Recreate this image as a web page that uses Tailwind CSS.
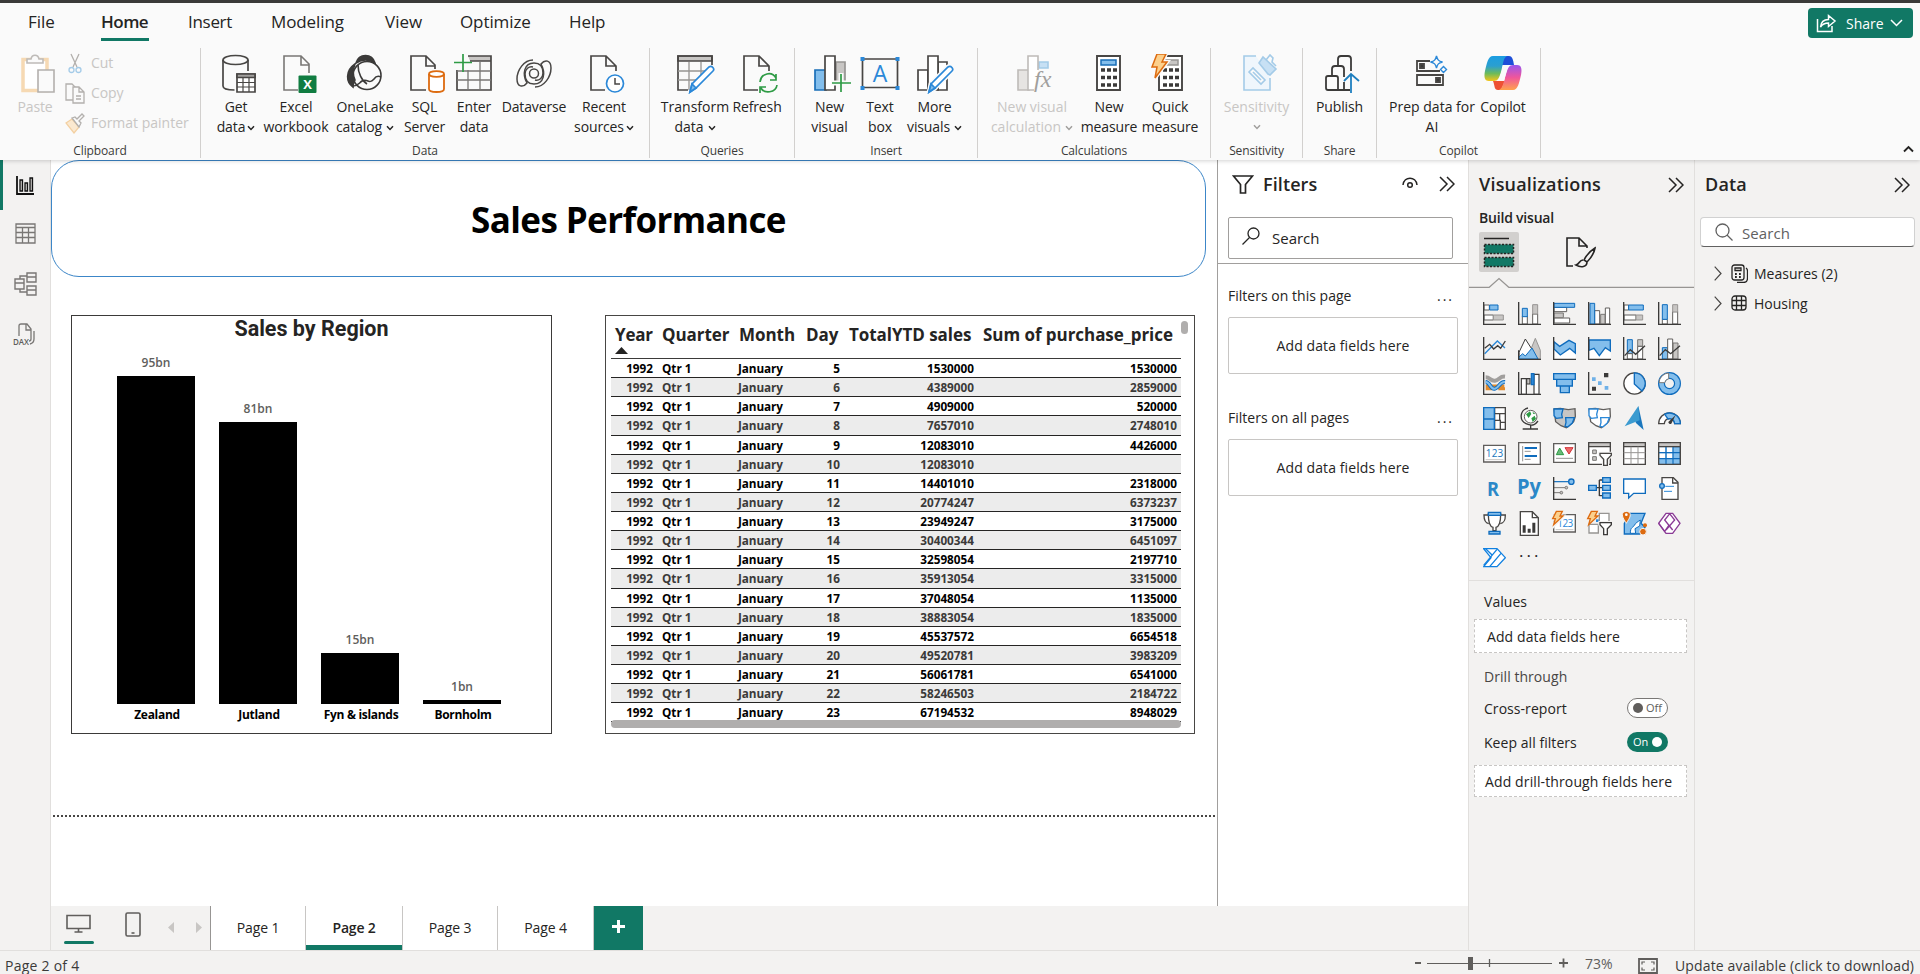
<!DOCTYPE html>
<html lang="en">
<head>
<meta charset="utf-8">
<title>Sales Performance</title>
<script src="https://cdn.jsdelivr.net/npm/@tailwindcss/browser@4"></script>
</head>
<body class="font-['Open_Sans','Noto_Sans',sans-serif] text-[14px] text-[#252423] bg-[#f3f2f1] overflow-hidden">
<svg class="hidden">
  <symbol id="chev" viewBox="0 0 8 6"><path d="M1 1.2 4 4.4 7 1.2" fill="none" stroke="currentColor" stroke-width="1.5"/></symbol>
  <symbol id="dbl" viewBox="0 0 16 16"><path d="M1 1l7 7-7 7M8 1l7 7-7 7" fill="none" stroke="#252423" stroke-width="1.5"/></symbol>
  <symbol id="axes" viewBox="0 0 69 69"><path d="M2 0V67H69" fill="none" stroke="#3b3a39" stroke-width="4"/></symbol>
</svg>
<div class="w-[1920px] h-[974px] flex flex-col overflow-hidden">

<!-- Ribbon -->
<header class="relative z-10 h-[160px] shrink-0 bg-[#fafafa] border-t-[3px] border-[#3b3a39] shadow-[0_1px_4px_rgba(0,0,0,0.18)] flex flex-col">
  <div class="h-[45px] flex justify-between shrink-0">
    <nav class="flex pl-[28px] pt-[6px] text-[17px] leading-[26px] whitespace-nowrap">
      <span class="w-[73px]">File</span>
      <span class="w-[87px]"><span class="inline-block h-[32px] w-[48px] font-semibold tracking-[-0.5px] border-b-[3px] border-[#117865]">Home</span></span>
      <span class="w-[83px] tracking-[-0.3px]">Insert</span>
      <span class="w-[114px] tracking-[-0.1px]">Modeling</span>
      <span class="w-[75px]">View</span>
      <span class="w-[109px] tracking-[-0.1px]">Optimize</span>
      <span class="tracking-[-0.1px]">Help</span>
    </nav>
    <div class="mt-[5px] mr-[7px] w-[105px] h-[30px] rounded-[4px] bg-[#117865] text-white flex items-center pl-[8px]">
      <svg class="w-[21px] h-[20px]" viewBox="0 0 21 20" fill="none" stroke="#fff" stroke-width="1.5"><path d="M1.5 6v12.5H16V13"/><path d="M4.500 14c.5-5 3-7.500 8-7.500V2.500L19 8l-6.500 5.500v-3.500c-3.500 0-6 1-8 4z"/></svg>
      <span class="ml-[9px] text-[14px]">Share</span>
      <svg class="ml-[6px] w-[13px] h-[8px]" viewBox="0 0 13 8"><path d="M1 1l5.500 5.500L12 1" fill="none" stroke="#fff" stroke-width="1.5"/></svg>
    </div>
  </div>
  <div class="flex h-[110px] text-center leading-[20px] tracking-[-0.12px] whitespace-nowrap relative">
    <section class="w-[201px] border-r border-[#d2d0ce] flex flex-col justify-between text-[#c8c6c4]">
      <div class="flex">
        <div class="w-[64px] pl-[6px] pt-[6px] flex flex-col items-center">
          <svg class="w-[36px] h-[40px] ml-[6px]" viewBox="0 0 36 40" fill="none" stroke-width="1.600"><path d="M3 5.500h24v31H3z" stroke="#f6d9b3" stroke-width="3.500" fill="#fff"/><path d="M7 9V5h4c1-5 7-5 8 0h4v4z" fill="#fafafa" stroke="#bebbb8"/><path d="M18 16h16v22H18z" fill="#fafafa" stroke="#b3b0ad"/></svg>
          <span class="mt-[3px] self-center">Paste</span>
        </div>
        <div class="flex flex-col text-left pl-px">
          <div class="h-[30px] flex items-center gap-[6px]"><svg class="w-[20px] h-[21px]" viewBox="0 0 20 21" fill="none" stroke="#b3b0ad" stroke-width="1.300"><path d="M6 1l6 13M14 1L8 14"/><circle cx="6.500" cy="17" r="2.500" stroke="#a4cbe8"/><circle cx="13.500" cy="17" r="2.500" stroke="#a4cbe8"/></svg>Cut</div>
          <div class="h-[30px] flex items-center gap-[6px]"><svg class="w-[20px] h-[21px]" viewBox="0 0 20 21" fill="#fafafa" stroke="#b3b0ad" stroke-width="1.300"><path d="M1 1h6l4 4v12H1z"/><path d="M8 4h6l5 5v11H8zM14 4v5h5M11 13h5M11 16h5"/></svg>Copy</div>
          <div class="h-[30px] flex items-center gap-[6px]"><svg class="w-[20px] h-[21px]" viewBox="0 0 20 21" fill="none" stroke-width="1.300"><path d="M1 10l6-4 7 8-5 6z" fill="#fbe9d0" stroke="#f3d0a2"/><path d="M7 5l3-1 2 2 5-5 2 2-5 5 2 2-2 4z" fill="#fafafa" stroke="#b3b0ad"/></svg><span class="tracking-[0px]">Format painter</span></div>
        </div>
      </div>
      <div class="text-[12px] leading-[13px] text-[#3b3a39] mb-px">Clipboard</div>
    </section>
    <section class="w-[449px] border-r border-[#d2d0ce] flex flex-col justify-between">
      <div class="flex pl-[10px] pt-[6px]">
        <div class="w-[50px] flex flex-col items-center"><svg class="w-[36px] h-[40px] ml-[6px]" viewBox="0 0 36 40" fill="none" stroke="#484644" stroke-width="1.700"><ellipse cx="14.500" cy="6" rx="12.500" ry="4.500"/><path d="M2 6v26c0 3 6 4 11.500 4M27 6V17"/><path d="M16 20h18v18H16z" fill="#fff"/><path d="M16 20h18v3.500H16z" fill="#a19f9d"/><path d="M16 28.500h18M16 33h18M22 24v14M28 24v14" stroke-width="1.200"/></svg><span class="mt-[3px]">Get<br>data<svg class="inline w-[8px] h-[6px] ml-[2px]"><use href="#chev"/></svg></span></div>
        <div class="w-[70px] flex flex-col items-center"><svg class="w-[36px] h-[40px] ml-[6px]" viewBox="0 0 36 40" fill="none"><path d="M17 36H3V2h17l8 8v9M20 2v9h8" stroke="#797775" stroke-width="1.600"/><rect x="17.500" y="21.500" width="18" height="17.500" rx="1" fill="#107c41"/><text x="26.500" y="35" font-size="13" font-weight="700" fill="#fff" text-anchor="middle">X</text></svg><span class="mt-[3px] tracking-[0px]">Excel<br>workbook</span></div>
        <div class="w-[68px] flex flex-col items-center"><svg class="w-[38px] h-[40px]" viewBox="0 0 38 40" fill="none" stroke="#3b3a39" stroke-width="1.600"><path d="M10 9C13-1 26-1 29 9c-6-4-13-4-19 0zM9 10C-1 17 0 28 7 33c0-3 1-5 2-7-3-6-2-11 0-16z" fill="#3b3a39"/><circle cx="21" cy="21.500" r="14"/><path d="M12 11c0 8 4 16 9 19M7 32c5 0 6-3 9-5 6-3 7 4 12-2 2-3 5-3 7-2"/></svg><span class="mt-[3px]">OneLake<br>catalog<svg class="inline w-[8px] h-[6px] ml-[4px]"><use href="#chev"/></svg></span></div>
        <div class="w-[52px] flex flex-col items-center"><svg class="w-[36px] h-[40px] ml-[6px]" viewBox="0 0 36 40" fill="none"><path d="M16 36H1V2h15l9 9v4M16 2v10h9" stroke="#484644" stroke-width="1.700"/><g stroke="#dd6b10" stroke-width="1.800" fill="#fff"><path d="M19 20v15c0 4 15 4 15 0V20"/><ellipse cx="26.500" cy="20" rx="7.500" ry="2.800"/></g></svg><span class="mt-[3px] -ml-px">SQL<br>Server</span></div>
        <div class="w-[46px] flex flex-col items-center"><svg class="w-[40px] h-[40px]" viewBox="0 0 40 40" fill="none" stroke="#484644" stroke-width="1.700"><path d="M14 2h23v5H16z" fill="#c8c6c4" stroke="none"/><path d="M14 2h23v34H3V16M16 7h21"/><path d="M3 17h34M3 26h34M14 16v20M26 8v28" stroke="#797775" stroke-width="1.300"/><path d="M9 0v18M0 8.500h18" stroke="#2e9b45" stroke-width="1.700"/></svg><span class="mt-[3px]">Enter<br>data</span></div>
        <div class="w-[74px] flex flex-col items-center"><svg class="w-[38px] h-[40px]" viewBox="0 0 38 40" fill="none" stroke="#484644" stroke-width="1.500"><g id="swirl"><path d="M18 6C9 6 2 16 2 25c0 8 6 9 10 4-5-9-3-20 7-20 6 0 9 4 9 10 0 5-4 8-8 7"/></g><use href="#swirl" transform="rotate(180 19 19.500)"/><circle cx="19" cy="19.500" r="4.500"/></svg><span class="mt-[3px]">Dataverse</span></div>
        <div class="w-[66px] flex flex-col items-center"><svg class="w-[36px] h-[40px] ml-[6px]" viewBox="0 0 36 40" fill="none"><path d="M16 36H2V2h15l10 10v5M17 2v10h10" stroke="#484644" stroke-width="1.700"/><circle cx="26" cy="29.500" r="8.500" fill="#fff" stroke="#2b88d8" stroke-width="1.700"/><path d="M26 24v6h5" stroke="#484644" stroke-width="1.500"/></svg><span class="mt-[3px]">Recent<br>sources<svg class="inline w-[8px] h-[6px] ml-[2px]"><use href="#chev"/></svg></span></div>
      </div>
      <div class="text-[12px] leading-[13px] text-[#3b3a39] mb-px">Data</div>
    </section>
    <section class="w-[145px] border-r border-[#d2d0ce] flex flex-col justify-between">
      <div class="flex pl-[10px] pt-[6px]">
        <div class="w-[70px] flex flex-col items-center"><svg class="w-[40px] h-[40px]" viewBox="0 0 40 40" fill="none" stroke="#484644" stroke-width="1.700"><path d="M3 2h34v5H3z" fill="#c8c6c4"/><path d="M13 36H3V2h34v9"/><path d="M3 17h29M3 26h19M14 8v28M26 8v14" stroke="#979593" stroke-width="1.300"/><path d="M15 38l2-8 17-17c3-2 6 2 4 4L21 34z" fill="#fff" stroke="#2b88d8"/><path d="M15 38l2-8 4 4z" fill="#83beec" stroke="#2b88d8"/></svg><span class="mt-[3px] tracking-[0px]">Transform<br>data<svg class="inline w-[8px] h-[6px] ml-[4px]"><use href="#chev"/></svg></span></div>
        <div class="w-[54px] flex flex-col items-center"><svg class="w-[36px] h-[40px] ml-[6px]" viewBox="0 0 36 40" fill="none"><path d="M16 36H2V2h15l10 10v5M17 2v10h10" stroke="#484644" stroke-width="1.700"/><path d="M18 28c1-9 12-11 16-4M34 20v6h-6M35 31c-1 8-13 9-16 3M18 39v-6h6" stroke="#2e9b45" stroke-width="1.700"/></svg><span class="mt-[3px]">Refresh</span></div>
      </div>
      <div class="text-[12px] leading-[13px] text-[#3b3a39] mb-px">Queries</div>
    </section>
    <section class="w-[183px] border-r border-[#d2d0ce] flex flex-col justify-between">
      <div class="flex pl-[10px] pt-[6px]">
        <div class="w-[49px] flex flex-col items-center"><svg class="w-[38px] h-[40px] ml-[4px]" viewBox="0 0 38 40" fill="none" stroke-width="1.700"><path d="M2 16h11v20H2z" fill="#83beec" stroke="#1a6fb8"/><path d="M23 8h9v20h-9z" fill="#c8c6c4" stroke="#979593"/><path d="M12 2h10v34H12z" fill="#fff" stroke="#484644"/><path d="M28 19v19M18 29h20" stroke="#fafafa" stroke-width="5"/><path d="M28 20v18M19 29h19" stroke="#2e9b45"/></svg><span class="mt-[3px]">New<br>visual</span></div>
        <div class="w-[52px] flex flex-col items-center"><svg class="w-[40px] h-[40px]" viewBox="0 0 40 40" fill="none"><path d="M2.500 5h35v28.500h-35z" stroke="#484644" stroke-width="1.700"/><path d="M.5 3h4v4h-4zM35.500 3h4v4h-4zM.5 32h4v4h-4zM35.500 32h4v4h-4z" fill="#2b88d8"/><text x="20" y="27.500" font-size="23" fill="#2b88d8" text-anchor="middle" textLength="14">A</text></svg><span class="mt-[3px]">Text<br>box</span></div>
        <div class="w-[57px] flex flex-col items-center"><svg class="w-[38px] h-[40px]" viewBox="0 0 38 40" fill="none" stroke="#484644" stroke-width="1.700"><path d="M22 8h9v28h-9z" fill="#fff"/><path d="M2 16h10v20H2z" fill="#fff"/><path d="M12 2h10v34H12z" fill="#fff"/><path d="M13 39l2-9 17-17c3-2 6 2 4 4L19 34z" fill="#fff" stroke="#fafafa" stroke-width="5"/><path d="M13 38l2-8 17-17c3-2 6 2 4 4L19 34z" fill="#fff" stroke="#2b88d8"/><path d="M13 38l2-8 4 4z" fill="#83beec" stroke="#2b88d8"/></svg><span class="mt-[3px]">More<br>visuals<svg class="inline w-[8px] h-[6px] ml-[4px]"><use href="#chev"/></svg></span></div>
      </div>
      <div class="text-[12px] leading-[13px] text-[#3b3a39] mb-px">Insert</div>
    </section>
    <section class="w-[233px] border-r border-[#d2d0ce] flex flex-col justify-between">
      <div class="flex pl-[9px] pt-[6px]">
        <div class="w-[90px] flex flex-col items-center text-[#c8c6c4] tracking-[0px]"><svg class="w-[38px] h-[40px] ml-[6px]" viewBox="0 0 38 40" fill="none" stroke-width="1.600"><path d="M2 16h11v20H2z" fill="#e6e4e2" stroke="#bebbb8"/><path d="M23 8h9v6h-9z" fill="#c7e0f4" stroke="#a4cbe8"/><path d="M22 16V2H12v34h6" fill="#fff" stroke="#bebbb8"/><text x="18" y="33" font-size="24" font-style="italic" font-family="Liberation Serif, serif" fill="#a19f9d">fx</text></svg><span class="mt-[3px]">New visual<br>calculation<svg class="inline w-[8px] h-[6px] ml-[4px] text-[#a19f9d]"><use href="#chev"/></svg></span></div>
        <div class="w-[64px] flex flex-col items-center"><svg class="w-[38px] h-[40px]" viewBox="0 0 38 40" fill="none"><path d="M7 2h23v34H7z" stroke="#484644" stroke-width="1.900" fill="#fff"/><path d="M11 6h15v5H11z" fill="#83beec" stroke="#1a6fb8" stroke-width="1.500"/><path d="M11 16h16M11 23.500h16M11 31h16" stroke="#3b3a39" stroke-width="3.500" stroke-dasharray="4 2"/></svg><span class="mt-[3px] tracking-[-0.1px]">New<br>measure</span></div>
        <div class="w-[58px] flex flex-col items-center"><svg class="w-[38px] h-[40px]" viewBox="0 0 38 40" fill="none"><path d="M8 2h23v34H8z" stroke="#484644" stroke-width="1.900" fill="#fff"/><path d="M11 6h16v5H11z" fill="#c8c6c4" stroke="#979593" stroke-width="1.500"/><path d="M12 16h16M12 23.500h16M12 31h16" stroke="#3b3a39" stroke-width="3.500" stroke-dasharray="4 2"/><path d="M6 0h9l-4 8h5L4 24l2-11H1z" fill="#fcd08c" stroke="#fafafa" stroke-width="4"/><path d="M6 0h9l-4 8h5L4 24l2-11H1z" fill="#fcd08c" stroke="#dd6b10" stroke-width="1.500"/></svg><span class="mt-[3px] tracking-[-0.1px]">Quick<br>measure</span></div>
      </div>
      <div class="text-[12px] leading-[13px] text-[#3b3a39] mb-px">Calculations</div>
    </section>
    <section class="w-[92px] border-r border-[#d2d0ce] flex flex-col justify-between">
      <div class="pt-[6px] flex flex-col items-center text-[#c8c6c4] tracking-[0px]"><svg class="w-[38px] h-[40px] ml-[6px]" viewBox="0 0 38 40" fill="none" stroke="#a4cbe8" stroke-width="1.600"><path d="M15 2H3v34h26V24" fill="#eff6fc"/><path d="M8 18l4-4 12 12-4 4z" fill="#fafafa"/><path d="M12 18l8 8"/><path d="M18 9l4-6 13 12-6 6-2-1z" fill="#c7e0f4"/><path d="M25 6l4-5 3 3-1 4 3 3 1 1"/></svg><span class="mt-[3px]">Sensitivity</span><svg class="w-[8px] h-[6px] mt-[7px] text-[#a19f9d]"><use href="#chev"/></svg></div>
      <div class="text-[12px] leading-[13px] text-[#3b3a39] mb-px">Sensitivity</div>
    </section>
    <section class="w-[74px] border-r border-[#d2d0ce] flex flex-col justify-between">
      <div class="pt-[6px] flex flex-col items-center"><svg class="w-[36px] h-[40px] ml-[5px]" viewBox="0 0 36 40" fill="none" stroke="#3b3a39" stroke-width="1.800"><path d="M14 12V5q0-3 3-3h7q3 0 3 3v12M8 22v-7q0-3 3-3h6q3 0 3 3v8M26 36H4q-2 0-2-2V24q0-2 2-2h8q2 0 2 2v12M20 28v8"/><path d="M27 39V20M20 27l7-7 8 7" stroke="#1f7fbf"/></svg><span class="mt-[3px]">Publish</span></div>
      <div class="text-[12px] leading-[13px] text-[#3b3a39] mb-px">Share</div>
    </section>
    <section class="w-[164px] border-r border-[#d2d0ce] flex flex-col justify-between">
      <div class="flex pl-[10px] pt-[6px]">
        <div class="w-[90px] flex flex-col items-center"><svg class="w-[34px] h-[40px]" viewBox="0 0 34 40" fill="none" stroke="#484644" stroke-width="1.800"><path d="M15 7H2v10h23M2 21h26v10H2z"/><path d="M5 10h4v4H5zM21 24h4v4h-4z" fill="#3b3a39"/><path d="M21.500 2c1 4 2 5 6 6-4 1-5 2-6 6-1-4-2-5-6-6 4-1 5-2 6-6zM28.500 12.500l3 3-3 3-3-3z" stroke="#2b88d8" stroke-width="1.400"/></svg><span class="mt-[3px] tracking-[0px]">Prep data for<br>AI</span></div>
        <div class="w-[52px] flex flex-col items-center"><svg class="w-[40px] h-[40px]" viewBox="0 0 40 40"><defs><linearGradient id="ca" x1="0" y1="0" x2="0" y2="1"><stop offset="0" stop-color="#1b9de2"/><stop offset=".4" stop-color="#2b9fd0"/><stop offset=".7" stop-color="#6dbb5a"/><stop offset="1" stop-color="#f5c518"/></linearGradient><linearGradient id="cb" x1="0" y1="0" x2="0" y2="1"><stop offset="0" stop-color="#9a55ee"/><stop offset=".5" stop-color="#f0569b"/><stop offset="1" stop-color="#ffa24c"/></linearGradient></defs><path d="M20 2h6c3 0 4 3 5 9H18z" fill="#1d4fd8"/><path d="M10 27h12l-4 9h-3c-4 0-3-4-5-9z" fill="#ee5133"/><path d="M10 2h14c-4 2-4 9-6 16-2 6-3 9-7 9H6c-5 0-5-5-4-10C4 9 5 2 10 2z" fill="url(#ca)"/><path d="M30 36H16c4-2 5-9 7-16 2-6 3-9 7-9h4c5 0 5 5 4 10-2 8-3 15-8 15z" fill="url(#cb)"/><path d="M20 12h5l-4 15h-5z" fill="#fafafa"/></svg><span class="mt-[3px]">Copilot</span></div>
      </div>
      <div class="text-[12px] leading-[13px] text-[#3b3a39] mb-px">Copilot</div>
    </section>
    <svg class="ml-auto mr-[6px] mt-[97px] w-[11px] h-[8px]" viewBox="0 0 11 8"><path d="M1 6.500 5.500 2 10 6.500" fill="none" stroke="#252423" stroke-width="1.900"/></svg>
  </div>
</header>

<main class="h-[790px] shrink-0 flex">
  <!-- View switcher -->
  <aside class="w-[51px] shrink-0 border-r border-[#e1dfdd] flex flex-col">
    <div class="h-[50px] border-l-[3px] border-[#117865] flex items-center pl-[13px]"><svg class="w-[18px] h-[19px]" viewBox="0 0 18 19" fill="#c8c6c4" stroke="#111" stroke-width="1.300"><path d="M1 0v18h17" fill="none" stroke-width="1.800"/><path d="M4 4h2.500v11H4zM9 7h2.500v8H9zM14 2h2.500v13H14z"/></svg></div>
    <div class="h-[46px] flex items-center pl-[15px]"><svg class="w-[21px] h-[21px]" viewBox="0 0 21 21" fill="none" stroke="#797775" stroke-width="1.300"><path d="M1 1h19v19H1zM1 4.500h19M1 9.500h19M1 14.500h19M7.500 4.500V20M13.500 4.500V20"/></svg></div>
    <div class="h-[56px] flex items-center pl-[14px]"><svg class="w-[24px] h-[24px]" viewBox="0 0 24 24" fill="none" stroke="#797775" stroke-width="1.400"><path d="M1 7h9v10H1zM1 11h9M13 1h9v9h-9zM13 5h9M13 14h9v9h-9zM13 18h9M6 7V4h7M6 17v3h7"/></svg></div>
    <div class="h-[44px] flex items-center pl-[13px]"><svg class="w-[22px] h-[22px] overflow-visible" viewBox="0 0 22 22" fill="none" stroke="#797775" stroke-width="1.300"><path d="M6 13V3q0-2 2-2h6l4 5v10q0 2-2 2M13 1v6h5M21 8v8q0 4-4 5"/><text x="0" y="21.500" font-size="8" font-weight="600" fill="#605e5c" stroke="none" textLength="16">DAX</text></svg></div>
  </aside>

  <div class="w-[1417px] shrink-0 flex flex-col">
    <div class="h-[746px] flex">
      <!-- Report canvas -->
      <div class="w-[1166px] shrink-0 bg-white">
        <div class="w-[1155px] h-[117px] rounded-[28px] border border-[#3c86c8] flex items-center justify-center text-black font-bold text-[35px] tracking-[-0.6px] pt-[4px]">Sales Performance</div>
        <div class="flex pl-[20px] mt-[38px] gap-[53px]">
          <div class="w-[481px] h-[419px] border border-[#3b3a39]">
            <div class="text-center font-['Roboto',sans-serif] font-bold text-[21.500px] leading-[26px]">Sales by Region</div>
            <div class="flex items-end gap-[24px] pl-[45px] h-[362px] font-semibold text-[12px] text-[#605e5c] text-center whitespace-nowrap">
              <div class="w-[78px]">95bn<div class="mt-[4px] h-[328px] bg-black"></div></div>
              <div class="w-[78px]">81bn<div class="mt-[4px] h-[282px] bg-black"></div></div>
              <div class="w-[78px]">15bn<div class="mt-[4px] h-[51px] bg-black"></div></div>
              <div class="w-[78px]">1bn<div class="mt-[4px] h-[4px] bg-black"></div></div>
            </div>
            <div class="flex gap-[24px] pl-[46px] mt-[2px] font-bold text-[12px] leading-[18px] text-black text-center whitespace-nowrap tracking-[-0.3px]">
              <span class="w-[78px]">Zealand</span><span class="w-[78px]">Jutland</span><span class="w-[78px]">Fyn &amp; islands</span><span class="w-[78px]">Bornholm</span>
            </div>
          </div>
          <div class="w-[590px] h-[419px] border border-[#484644] relative pl-[5px]">
            <div class="w-[570px]">
              <div class="flex h-[43px] pt-[6px] border-b border-[#3b3a39] font-bold text-[17px] leading-[25px] whitespace-nowrap tracking-[-0.05px]">
                <div class="w-[51px] pl-[4px] tracking-[-0.2px]">Year<svg class="w-[13px] h-[7px]" viewBox="0 0 13 7"><path d="M6.500 0 13 7H0z" fill="#252423"/></svg></div>
                <div class="w-[77px]">Quarter</div><div class="w-[67px]">Month</div><div class="w-[43px]">Day</div><div class="w-[134px]">TotalYTD sales</div><div>Sum of purchase_price</div>
              </div>
              <div id="rows" class="h-[363px] overflow-hidden font-bold text-[11.750px] leading-[17px]"></div>
            </div>
            <div class="absolute left-[5px] bottom-[5px] w-[570px] h-[8px] rounded-full bg-[#b0aead]"></div>
            <div class="absolute right-[6px] top-[5px] w-[7px] h-[13px] rounded-full bg-[#b0aead]"></div>
          </div>
        </div>
        <svg class="ml-[2px] mt-[81px] w-[1164px] h-[2px] block"><path d="M0 1H1164" stroke="#484644" stroke-width="2" stroke-dasharray="2 2"/></svg>
      </div>
      <!-- Filters -->
      <section class="w-[251px] shrink-0 bg-white border-l border-[#a19f9d]">
        <div class="h-[104px] border-b border-[#a19f9d] pl-[10px]">
          <div class="flex items-center h-[49px] pl-[4px]">
            <svg class="w-[22px] h-[19px]" viewBox="0 0 22 19"><path d="M1.500 1h19l-7 8.500V18h-5V9.500z" fill="none" stroke="#252423" stroke-width="1.700"/></svg>
            <span class="ml-[9px] font-semibold text-[18px] w-[139px] tracking-[0.1px]">Filters</span>
            <svg class="w-[16px] h-[12px] -mt-[3px]" viewBox="0 0 16 12" fill="none" stroke="#252423" stroke-width="1.500"><path d="M1 8c1-9 13-9 14 0"/><circle cx="8" cy="8" r="2.300"/></svg>
            <svg class="w-[16px] h-[16px] ml-[21px] -mt-[2px]"><use href="#dbl"/></svg>
          </div>
          <div class="mt-[8px] w-[225px] h-[42px] border border-[#a19f9d] rounded-[2px] flex items-center pl-[13px]"><svg class="w-[18px] h-[18px] -mt-[4px]" viewBox="0 0 18 18" fill="none" stroke="#252423" stroke-width="1.300"><circle cx="11.500" cy="6.500" r="5.500"/><path d="M7.500 10.500.5 17.500"/></svg><span class="ml-[12px] mt-px text-[15px]">Search</span></div>
        </div>
        <div class="pl-[10px] pr-[9px]">
          <div class="flex justify-between items-center h-[53px] pt-[9px] pr-[5px] tracking-[0.02px]"><span>Filters on this page</span><span class="tracking-[2px]">...</span></div>
          <div class="w-[230px] h-[57px] border border-[#c8c6c4] rounded-[2px] flex items-center justify-center tracking-[0.1px]">Add data fields here</div>
          <div class="flex justify-between items-center h-[65px] pt-[22px] pr-[5px] tracking-[0.02px]"><span>Filters on all pages</span><span class="tracking-[2px]">...</span></div>
          <div class="w-[230px] h-[57px] border border-[#c8c6c4] rounded-[2px] flex items-center justify-center tracking-[0.1px]">Add data fields here</div>
        </div>
      </section>
    </div>
    <!-- Page tabs -->
    <div class="h-[44px] flex text-center leading-[44px] tracking-[-0.1px]">
      <div class="w-[160px] flex border-r border-[#979593]">
        <div class="ml-[13px] pt-[8px] w-[30px]"><svg class="w-[26px] h-[20px] mx-auto" viewBox="0 0 26 20" fill="none" stroke="#605e5c" stroke-width="1.600"><path d="M1 1.500h23v13H1zM12.500 15v3M8.500 18h8"/></svg><div class="mt-[7px] h-[3px] rounded-full bg-[#117865]"></div></div>
        <svg class="ml-[31px] mt-[6px] w-[16px] h-[25px]" viewBox="0 0 16 25" fill="none" stroke="#605e5c" stroke-width="1.600"><rect x="1" y="1" width="14" height="23" rx="1.500"/><path d="M6.500 21h3"/></svg>
        <svg class="ml-[27px] mt-[16px] w-[34px] h-[11px]" viewBox="0 0 34 11" fill="#c8c6c4"><path d="M6 0v11L0 5.500zM28 0v11l6-5.500z"/></svg>
      </div>
      <div class="w-[95px] bg-white border-r border-[#c8c6c4]">Page 1</div>
      <div class="w-[97px] bg-white border-r border-[#c8c6c4] shadow-[inset_0_-5px_0_#117865] font-semibold tracking-[-0.2px]">Page 2</div>
      <div class="w-[95px] bg-white border-r border-[#c8c6c4]">Page 3</div>
      <div class="w-[96px] bg-white border-r border-[#c8c6c4]">Page 4</div>
      <div class="w-[49px] bg-[#117865] flex justify-center pt-[14px]"><svg class="w-[13px] h-[13px]" viewBox="0 0 13 13"><path d="M6.500 0v13M0 6.500h13" stroke="#fff" stroke-width="3"/></svg></div>
    </div>
  </div>

  <!-- Visualizations -->
  <section class="w-[227px] shrink-0 border-x border-[#e1dfdd]">
    <div class="h-[49px] flex items-center justify-between pl-[10px] pr-[10px]"><span class="font-semibold text-[18px] tracking-[0.2px]">Visualizations</span><svg class="w-[16px] h-[16px]"><use href="#dbl"/></svg></div>
    <div class="pl-[10px] h-[23px] pt-[2px] leading-[13px] font-semibold text-[14px] tracking-[-0.2px]">Build visual</div>
    <div class="flex pl-[10px] h-[40px]">
      <div class="w-[40px] h-[40px] bg-[#d2d0ce] rounded-[2px] flex items-center justify-center"><svg class="w-[32px] h-[32px]" viewBox="0 0 32 32" fill="none"><path d="M1 2.500h25" stroke="#252423" stroke-width="1.500"/><path d="M1.500 8.500h29v9h-29zM1.500 21.500h29v9h-29z" fill="#117865" stroke="#252423" stroke-width="1.500" stroke-dasharray="2 1.500"/></svg></div>
      <svg class="ml-[47px] mt-[5px] w-[31px] h-[31px]" viewBox="0 0 31 31" fill="none" stroke="#252423" stroke-width="1.600"><path d="M7 29H1V1h12l8 8v2M13 1v8h8"/><path d="M29 11c-5 3-9 8-11 12l3 2c4-4 7-8 8-14zM17 23c-4 0-3 4-7 5 5 3 11 2 11-3" fill="#f3f2f1"/></svg>
    </div>
    <svg class="block w-[225px] h-[16px]" viewBox="0 0 225 16"><path d="M0 15.500H20L30 6.500 40 15.500H225" fill="none" stroke="#979593" stroke-width="1.300"/></svg>
    <div class="grid grid-cols-[repeat(6,23px)] gap-[12px] pl-[14px] pt-[14px]">
      <!-- bar and column charts -->
      <svg viewBox="0 0 69 69"><path d="M3 9h16v15H3zM3 39h28v15H3z" fill="#fff" stroke="#605e5c" stroke-width="3"/><path d="M20 9h25v15H20z" fill="#83beec" stroke="#0f6cbd" stroke-width="3"/><path d="M31 39h30v15H31z" fill="#c8c6c4" stroke="#979593" stroke-width="3"/><use href="#axes"/></svg>
      <svg viewBox="0 0 69 69"><path d="M13 42h15v24H13zM44 36h15v30H44z" fill="#fff" stroke="#605e5c" stroke-width="3"/><path d="M13 19h15v25H13z" fill="#83beec" stroke="#0f6cbd" stroke-width="3"/><path d="M44 8h15v28H44z" fill="#c8c6c4" stroke="#979593" stroke-width="3"/><use href="#axes"/></svg>
      <svg viewBox="0 0 69 69"><path d="M3 16h38v13H3zM3 48h47v15H3z" fill="#fff" stroke="#605e5c" stroke-width="3"/><path d="M3 33h28v14H3z" fill="#c8c6c4" stroke="#797775" stroke-width="3"/><path d="M3 4h62v12H3z" fill="#83beec" stroke="#0f6cbd" stroke-width="3"/><use href="#axes"/></svg>
      <svg viewBox="0 0 69 69"><path d="M20 26h15v40H20zM52 18h13v48H52z" fill="#fff" stroke="#605e5c" stroke-width="3"/><path d="M38 37h13v29H38z" fill="#c8c6c4" stroke="#797775" stroke-width="3"/><path d="M6 4h14v62H6z" fill="#83beec" stroke="#0f6cbd" stroke-width="3"/><use href="#axes"/></svg>
      <svg viewBox="0 0 69 69"><path d="M3 9h14v15H3zM3 39h36v15H3z" fill="#fff" stroke="#605e5c" stroke-width="3"/><path d="M17 9h44v15H17z" fill="#83beec" stroke="#0f6cbd" stroke-width="3"/><path d="M39 39h20v15H39z" fill="#c8c6c4" stroke="#979593" stroke-width="3"/><use href="#axes"/></svg>
      <svg viewBox="0 0 69 69"><path d="M13 52h15v14H13zM44 29h15v37H44z" fill="#fff" stroke="#605e5c" stroke-width="3"/><path d="M13 8h15v44H13z" fill="#83beec" stroke="#0f6cbd" stroke-width="3"/><path d="M44 8h15v22H44z" fill="#c8c6c4" stroke="#979593" stroke-width="3"/><use href="#axes"/></svg>
      <!-- line, area and combo charts -->
      <svg viewBox="0 0 69 69" fill="none" stroke-width="4"><path d="M5 50 43 12 66 33" stroke="#2b88d8"/><path d="M5 34 20 22 32 36 44 26 53 34 67 12" stroke="#3b3a39"/><use href="#axes"/></svg>
      <svg viewBox="0 0 69 69" stroke-width="3"><path d="M34 48 52 4 67 40V66H40z" fill="#c8c6c4" stroke="#979593"/><path d="M3 46 22 6 44 40 26 66H3z" fill="#fff" stroke="#3b3a39"/><path d="M3 66V60L14 50 22 57 42 33 60 66z" fill="#83beec" stroke="#0f6cbd"/><path d="M2 40V67H69" fill="none" stroke="#3b3a39" stroke-width="4"/></svg>
      <svg viewBox="0 0 69 69"><path d="M3 40 20 55 50 38 68 50V66H3z" fill="#fff"/><path d="M3 14 20 28 48 10 67 20V48L50 34 22 54 3 36z" fill="#83beec" stroke="#0f6cbd" stroke-width="4"/><use href="#axes"/></svg>
      <svg viewBox="0 0 69 69"><path d="M3 36V66H68V40z" fill="#fff"/><path d="M3 9H67V42L52 32 34 56 18 34 3 40z" fill="#83beec" stroke="#0f6cbd" stroke-width="4"/><use href="#axes"/></svg>
      <svg viewBox="0 0 69 69" stroke-width="3"><path d="M13 8h15v42H13z" fill="#83beec" stroke="#0f6cbd"/><path d="M44 8h15v20H44z" fill="#c8c6c4" stroke="#797775"/><path d="M13 50h15v16H13zM44 28h15v38H44z" fill="#fff" stroke="#605e5c"/><path d="M5 56 22 38 38 52 66 26" fill="none" stroke="#3b3a39" stroke-width="4"/><use href="#axes"/></svg>
      <svg viewBox="0 0 69 69" stroke-width="3"><path d="M13 32h16v34H13z" fill="#83beec" stroke="#0f6cbd"/><path d="M45 18h15v48H45z" fill="#c8c6c4" stroke="#797775"/><path d="M29 6h15v60H29z" fill="#fff" stroke="#605e5c"/><path d="M5 56 22 38 38 50 66 26" fill="none" stroke="#3b3a39" stroke-width="4"/><use href="#axes"/></svg>
      <!-- ribbon, waterfall, funnel, scatter, pie, donut -->
      <svg viewBox="0 0 69 69" fill="none"><path d="M8 50h20M46 50h20M8 42h56" stroke="#e08a2c" stroke-width="9"/><path d="M8 16c14 0 14 12 28 10S50 12 66 14" stroke="#a19f9d" stroke-width="12"/><path d="M8 30c14 0 14 24 28 20s14-22 30-20" stroke="#0f6cbd" stroke-width="12"/><path d="M8 30c14 0 14 24 28 20s14-22 30-20" stroke="#83beec" stroke-width="6"/><use href="#axes"/></svg>
      <svg viewBox="0 0 69 69" fill="#fff" stroke="#3b3a39" stroke-width="3.500"><path d="M10 20h15v47H10zM48 7h15v60H48z"/><path d="M26 20h10v16H26z" fill="#c8c6c4"/><path d="M40 5h8v33h-8z" fill="#2b88d8" stroke="#0f6cbd"/><use href="#axes"/></svg>
      <svg viewBox="0 0 69 69" fill="#83beec" stroke="#0f6cbd" stroke-width="4"><path d="M2 5h65v17H2zM11 22h47v20H11zM22 42h27v20H22z"/></svg>
      <svg viewBox="0 0 69 69"><path d="M12 16h11v11H12zM30 28h11v11H30zM50 42h11v11H50z" fill="#6fb1e8"/><path d="M48 3h13v13H48zM12 44h12v12H12z" fill="#3b3a39"/><use href="#axes"/></svg>
      <svg viewBox="0 0 69 69"><circle cx="34.500" cy="34.500" r="32" fill="#fff" stroke="#484644" stroke-width="4"/><path d="M34 2.500A32 32 0 0 1 57 57L34 36z" fill="#83beec" stroke="#0f6cbd" stroke-width="4"/></svg>
      <svg viewBox="0 0 69 69"><circle cx="34.500" cy="34.500" r="24" fill="none" stroke="#0f6cbd" stroke-width="21"/><circle cx="34.500" cy="34.500" r="24" fill="none" stroke="#83beec" stroke-width="14"/><path d="M3 32A31 31 0 0 1 32 3V20A16 16 0 0 0 20 32z" fill="#fff" stroke="#797775" stroke-width="3"/></svg>
      <!-- treemap, maps, gauge -->
      <svg viewBox="0 0 69 69" stroke-width="4"><path d="M35 2h32v65H35z" fill="#fff" stroke="#484644"/><path d="M35 20h32M50 20v20M50 40H35M35 40h17v27M52 46h15" fill="none" stroke="#484644"/><path d="M2 2h32v65H2zM2 36h32" fill="#83beec" stroke="#0f6cbd"/></svg>
      <svg viewBox="0 0 69 69" fill="none"><circle cx="38" cy="29" r="19" fill="#fff" stroke="#605e5c" stroke-width="3"/><path d="M24 22l12-9 4 8-8 12zM40 34l10-8 4 10-10 9zM44 14l9 8-8-2z" fill="#2e9b45"/><path d="M30 3C6 8 2 40 24 50s30 0 36-8M38 54v10M14 66h46" stroke="#3b3a39" stroke-width="4"/></svg>
      <svg viewBox="0 0 69 69" stroke-width="4"><path d="M3 6 22 4 46 8 66 5 67 28 62 44 50 55 40 62 24 56 8 44z" fill="#c8c6c4" stroke="#605e5c"/><path d="M3 6h27l-4 16 2 10-18 2-7-8zM38 32h26l-6 16-14 12-8-2 3-12z" fill="#83beec" stroke="#0f6cbd"/></svg>
      <svg viewBox="0 0 69 69" stroke-width="4"><path d="M3 6 22 4 46 8 66 5 67 28 62 44 50 55 40 62 24 56 8 44z" fill="#fff" stroke="#605e5c"/><path d="M3 6h27l-4 16 2 10-18 2-7-8zM38 32h26l-6 16-14 12-8-2 3-12z" fill="#fff" stroke="#2b88d8"/></svg>
      <svg viewBox="0 0 69 69" class="overflow-visible"><path d="M46-3 62 69 38 47z" fill="#1a77bd"/><path d="M46-3 5 58 50 40z" fill="#3b9bd0"/></svg>
      <svg viewBox="0 0 69 69"><path d="M2 50A32 32 0 0 1 67 50H50A15 15 0 0 0 19 50z" fill="#fff" stroke="#484644" stroke-width="4"/><path d="M20 22A32 32 0 0 1 67 50H50A15 15 0 0 0 30 36z" fill="#83beec" stroke="#0f6cbd" stroke-width="4"/><path d="M53 24 40 50a6 6 0 0 1-9-5z" fill="#3b3a39"/></svg>
      <!-- cards, KPI, slicer, tables -->
      <svg viewBox="0 0 69 69"><path d="M2 10h65v50H2z" fill="#fff" stroke="#605e5c" stroke-width="4"/><text x="8" y="45" font-size="30" fill="#1a77bd" textLength="53">123</text><path d="M8 53h53" stroke="#c8c6c4" stroke-width="3"/></svg>
      <svg viewBox="0 0 69 69"><path d="M2 2h65v65H2z" fill="#fff" stroke="#605e5c" stroke-width="4"/><path d="M14 12v46M20 28h18M20 52h18" stroke="#979593" stroke-width="3"/><path d="M20 18h37M20 42h37" stroke="#0f6cbd" stroke-width="6"/></svg>
      <svg viewBox="0 0 69 69"><path d="M2 5h65v56H2z" fill="#fff" stroke="#605e5c" stroke-width="4"/><path d="M10 38 20 18 32 38z" fill="#6ab97a" stroke="#2e9b45" stroke-width="3"/><path d="M36 17H60L48 36z" fill="#ee6a6a" stroke="#d13438" stroke-width="3"/><path d="M9 49h51" stroke="#979593" stroke-width="3"/></svg>
      <svg viewBox="0 0 69 69" stroke="#484644" stroke-width="4" fill="#fff" class="overflow-visible"><path d="M2 2h65v65H2z"/><path d="M2 2h65v12H2z" fill="#c8c6c4"/><path d="M14 24h11v11H14zM14 44h11v11H14z" fill="#c8c6c4" stroke="#797775" stroke-width="3"/><path d="M36 34h34v6L58 52v18H47V52L36 40z" stroke="#f3f2f1" stroke-width="10"/><path d="M36 34h34v6L58 52v18H47V52L36 40z"/></svg>
      <svg viewBox="0 0 69 69" fill="none" stroke="#484644" stroke-width="4"><path d="M2 2h65v65H2z" fill="#fff"/><path d="M2 2h65v12H2z" fill="#c8c6c4"/><path d="M2 32h65M2 50h65M24 14v53M45 14v53" stroke="#979593" stroke-width="3"/></svg>
      <svg viewBox="0 0 69 69" fill="none"><path d="M2 14h65v53H2z" fill="#83beec"/><path d="M4 16h18v14H4zM26 16h18v14H26zM4 34h18v14H4zM26 34h18v14H26z" fill="#fff"/><path d="M45 14h22v53H45M2 32h65M2 50h65M24 14v53M45 14v53" stroke="#0f6cbd" stroke-width="3.500"/><path d="M2 2h65v12H2z" fill="#c8c6c4"/><path d="M2 2h65v65H2zM2 14h65" stroke="#484644" stroke-width="4"/></svg>
      <!-- script visuals, influencers, decomposition tree, Q&A, narrative -->
      <svg viewBox="0 0 69 69" class="overflow-visible"><text x="12" y="56" font-size="60" font-weight="700" fill="#2b88c8" textLength="36" lengthAdjust="spacingAndGlyphs">R</text></svg>
      <svg viewBox="0 0 69 69" class="overflow-visible"><text x="-3" y="50" font-size="62" font-weight="700" fill="#2b88c8" textLength="72" lengthAdjust="spacingAndGlyphs">Py</text></svg>
      <svg viewBox="0 0 69 69"><path d="M3 14h44" stroke="#0f6cbd" stroke-width="3.500"/><circle cx="55" cy="14" r="8" fill="#83beec" stroke="#0f6cbd" stroke-width="4"/><path d="M3 32h34M3 47h20" stroke="#797775" stroke-width="3"/><circle cx="40" cy="32" r="4" fill="#c8c6c4" stroke="#797775" stroke-width="3"/><circle cx="25" cy="47" r="4" fill="#c8c6c4" stroke="#797775" stroke-width="3"/><use href="#axes"/></svg>
      <svg viewBox="0 0 69 69"><path d="M24 32h20M34 9h10M34 56h10M34 9v48" stroke="#3b3a39" stroke-width="4" fill="none"/><path d="M2 25h23v15H2zM44 2h23v14H44zM44 25h23v15H44zM44 48h23v15H44z" fill="#83beec" stroke="#0f6cbd" stroke-width="4"/></svg>
      <svg viewBox="0 0 69 69"><path d="M2 6h65v43H32L17 63V49H2z" fill="#fff" stroke="#0f6cbd" stroke-width="4"/></svg>
      <svg viewBox="0 0 69 69"><path d="M12 20V2h34l14 14v51H12V34" fill="#fff" stroke="#484644" stroke-width="4"/><path d="M44 2v16h16" fill="none" stroke="#484644" stroke-width="4"/><path d="M22 28h26M18 43h24" stroke="#2b88d8" stroke-width="3"/><circle cx="12" cy="27" r="7" fill="#83beec" stroke="#0f6cbd" stroke-width="4"/></svg>
      <!-- metrics, paginated report, new card and slicer, ArcGIS, Power Apps -->
      <svg viewBox="0 -1 69 69" class="overflow-visible"><path d="M16 8H3c0 18 4 24 14 26M52 8h15c0 18-4 24-15 26M16 5h37c0 28-6 38-14 40v10h-9V45C22 43 16 33 16 5z" fill="#fff" stroke="#484644" stroke-width="4"/><path d="M16 0h37v9H16zM18 57h33v8H18z" fill="#83beec" stroke="#0f6cbd" stroke-width="4"/></svg>
      <svg viewBox="0 0 69 69" class="overflow-visible"><path d="M7-1h36l18 18v53H7z" fill="#fff" stroke="#484644" stroke-width="4"/><path d="M43-1v18h18" fill="none" stroke="#484644" stroke-width="4"/><path d="M14 40h9v22h-9zM29 50h9v12h-9zM43 32h9v30h-9z" fill="#3b3a39"/></svg>
      <svg viewBox="0 0 69 69" class="overflow-visible"><path d="M2 8h65v52H2z" fill="#fff" stroke="#605e5c" stroke-width="4"/><text x="13" y="46" font-size="30" fill="#2b88d8" textLength="48">123</text><path d="M8 53h53" stroke="#c8c6c4" stroke-width="3"/><path d="M10-2h18l-7 14h9L2 42l5-20H-1z" fill="#f3f2f1" stroke="#f3f2f1" stroke-width="9"/><path d="M10-2h18l-7 14h9L2 38l5-18H-1z" fill="#fcd08c" stroke="#dd6b10" stroke-width="4"/></svg>
      <svg viewBox="0 0 69 69" fill="#fff" stroke="#979593" stroke-width="4" class="overflow-visible"><path d="M34 4h29v26H34zM3 37h28v26H3z"/><path d="M24 22h8v8h-8z" fill="#2b88d8" stroke="none"/><path d="M36 32h34v6L58 50v18H47V50L36 38z" stroke="#f3f2f1" stroke-width="10"/><path d="M36 32h34v6L58 50v18H47V50L36 38z" stroke="#3b3a39"/><path d="M10-2h18l-7 14h9L2 38l5-18H-1z" fill="#fcd08c" stroke="#dd6b10"/></svg>
      <svg viewBox="0 0 69 69" class="overflow-visible"><path d="M22 4h44l-12 30 12 12-16 20H4V34z" fill="#83beec" stroke="#0f6cbd" stroke-width="4"/><path d="M22 64c0-20 8-16 12-24s10-10 18-16l-2 18-14 8 2 14z" fill="#fff" stroke="#0f6cbd" stroke-width="3"/><path d="M-2 8C-2-5 22-5 22 8c0 10-8 18-12 26C6 26-2 18-2 8z" fill="#dd6b10" stroke="#f3f2f1" stroke-width="3"/><circle cx="10" cy="8" r="4" fill="#fff"/><circle cx="60" cy="59" r="10" fill="#dd6b10" stroke="#f3f2f1" stroke-width="3"/><circle cx="66" cy="40" r="6" fill="#dd6b10"/></svg>
      <svg viewBox="0 0 69 69" fill="#fff" stroke="#8a3a96" stroke-width="4"><path d="M24 4h20l22 30-22 30H24L2 34z"/><path d="M36 4 20 24l24 30M34 4l16 20-26 30M2 34l18 24 14-20" fill="none"/></svg>
      <svg viewBox="0 3 69 69" fill="#fff" stroke="#1080e0" stroke-width="4"><path d="M2 8h40l25 27-25 27H2l22-27z"/><path d="M20 62 54 22M2 58 42 10M8 8l20 20" fill="none"/></svg>
      <span class="text-[17px] leading-[8px] tracking-[3px] pl-px">...</span>
    </div>
    <div class="mt-[10px] border-t border-[#e1dfdd] pl-[5px] tracking-[0.05px]">
      <div class="h-[38px] pl-[10px] pt-[10px]">Values</div>
      <div class="w-[213px] h-[34px] border border-dashed border-[#c8c6c4] bg-white flex items-center pl-[12px] tracking-[0.1px]">Add data fields here</div>
      <div class="pl-[10px] pt-[13px] h-[40px] font-medium text-[#484644]">Drill through</div>
      <div class="pl-[10px] pr-[26px] h-[30px] flex items-center justify-between">Cross-report<span class="w-[41px] h-[20px] rounded-full border border-[#797775] bg-white flex items-center pl-[5px] gap-[3px] text-[11px] text-[#605e5c]"><i class="w-[10px] h-[10px] rounded-full bg-[#605e5c]"></i>Off</span></div>
      <div class="pl-[10px] pr-[26px] h-[38px] flex items-center justify-between">Keep all filters<span class="w-[41px] h-[20px] rounded-full bg-[#117865] flex items-center pl-[6px] gap-[4px] text-[11px] text-white">On<i class="w-[10px] h-[10px] rounded-full bg-white"></i></span></div>
      <div class="mt-[4px] w-[213px] h-[32px] border border-dashed border-[#c8c6c4] bg-white flex items-center pl-[10px] tracking-[0.12px]">Add drill-through fields here</div>
    </div>
  </section>

  <!-- Data -->
  <section class="w-[225px] shrink-0">
    <div class="h-[49px] flex items-center justify-between pl-[10px] pr-[10px]"><span class="font-semibold text-[18px] tracking-[0.2px]">Data</span><svg class="w-[16px] h-[16px]"><use href="#dbl"/></svg></div>
    <div class="ml-[5px] mt-[8px] w-[215px] h-[30px] rounded-[4px] bg-white border border-[#d1d1d1] border-b-[#616161] flex items-center pl-[14px] text-[15px] text-[#616161]"><svg class="w-[18px] h-[18px]" viewBox="0 0 18 18" fill="none" stroke="#616161" stroke-width="1.300"><circle cx="7.500" cy="7.500" r="6.500"/><path d="M12 12l5.500 5.500"/></svg><span class="ml-[9px] mt-[2px] tracking-[0.1px]">Search</span></div>
    <div class="pl-[19px] pt-[11px] leading-[29px]">
      <div class="h-[30px] flex items-center"><svg class="w-[8px] h-[15px]" viewBox="0 0 8 15"><path d="M.7.7 7 7.500.7 14.300" fill="none" stroke="#484644" stroke-width="1.200"/></svg><svg class="ml-[9px] w-[17px] h-[19px]" viewBox="0 0 17 19" fill="none" stroke="#252423" stroke-width="1.300"><rect x="1" y="1" width="12" height="15" rx="2.500"/><path d="M4 4h6v2.500H4zM15 4c1.500 1 1.500 2 1.500 3v7c0 3-1.500 4.500-4 4.500H6"/><path d="M4 10h6M4 13h6" stroke-dasharray="1.800 2.200" stroke-width="1.800"/></svg><span class="ml-[6px]">Measures (2)</span></div>
      <div class="h-[30px] flex items-center"><svg class="w-[8px] h-[15px]" viewBox="0 0 8 15"><path d="M.7.7 7 7.500.7 14.300" fill="none" stroke="#484644" stroke-width="1.200"/></svg><svg class="ml-[9px] w-[16px] h-[16px]" viewBox="0 0 16 16" fill="none" stroke="#252423" stroke-width="1.300"><rect x="1" y="1" width="14" height="14" rx="3"/><path d="M1 5.500h14M1 10.500h14M5.500 1v14M10.500 1v14"/></svg><span class="ml-[7px]">Housing</span></div>
    </div>
  </section>
</main>

<!-- Status bar -->
<footer class="h-[24px] shrink-0 border-t border-[#e1dfdd] flex items-center text-[#3b3a39] whitespace-nowrap leading-[18px]">
  <span class="ml-[5px] mt-[7px] w-[1408px] tracking-[0.25px]">Page 2 of 4</span>
  <svg class="w-[160px] h-[16px] mt-[3px]" viewBox="0 0 160 16" stroke="#605e5c" fill="none"><path d="M2 7h6M146 7h9M150.500 2.500v9" stroke-width="1.800"/><path d="M14 7.500h125" stroke-width="1.200"/><path d="M57.500 1v13" stroke-width="5"/><path d="M76.500 3v8" stroke-width="1.300"/></svg>
  <span class="ml-[12px] mt-[2px] w-[53px] text-[14px] text-[#605e5c]">73%</span>
  <svg class="w-[20px] h-[16px] mt-[6px]" viewBox="0 0 20 16" fill="none" stroke="#605e5c"><path d="M1 1h18v14H1z" stroke-width="1.800"/><path d="M4 6.500V4h3M13 4h3v2.500M16 9.500V12h-3M7 12H4V9.500" stroke-width="1.200"/></svg>
  <span class="ml-[17px] mt-[7px] tracking-[0.14px]">Update available (click to download)</span>
</footer>
</div>
<script>
const data = [[5,'1530000','1530000'],[6,'4389000','2859000'],[7,'4909000','520000'],[8,'7657010','2748010'],[9,'12083010','4426000'],[10,'12083010',''],[11,'14401010','2318000'],[12,'20774247','6373237'],[13,'23949247','3175000'],[14,'30400344','6451097'],[15,'32598054','2197710'],[16,'35913054','3315000'],[17,'37048054','1135000'],[18,'38883054','1835000'],[19,'45537572','6654518'],[20,'49520781','3983209'],[21,'56061781','6541000'],[22,'58246503','2184722'],[23,'67194532','8948029']];
document.getElementById('rows').innerHTML = data.map((r, i) =>
  `<div class="${i % 2 ? 'flex h-[19.13px] border-b border-[#252423] pt-px text-[#3b3a39] bg-[#ececec]' : 'flex h-[19.13px] border-b border-[#252423] pt-px text-black'}"><span class="w-[42px] text-right">1992</span><span class="w-[85px] pl-[9px]">Qtr 1</span><span class="w-[62px] tracking-[-0.1px]">January</span><span class="w-[40px] text-right">${r[0]}</span><span class="w-[134px] text-right">${r[1]}</span><span class="w-[203px] text-right">${r[2]}</span></div>`).join('');
</script>
</body>
</html>
